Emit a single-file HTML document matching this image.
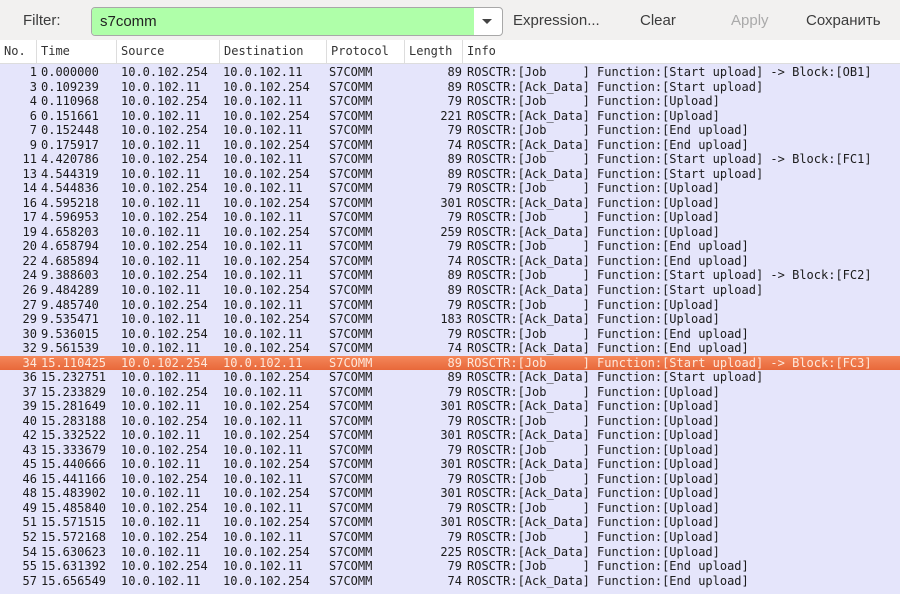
<!DOCTYPE html>
<html><head><meta charset="utf-8"><style>
body{margin:0;width:900px;height:594px;overflow:hidden;background:#e5e5fb;font-family:"Liberation Sans",sans-serif}
.tb{position:absolute;left:0;top:0;width:900px;height:40px;background:#f2f1f0}
.tb span{position:absolute;top:12px;font-size:15px;color:#3c3c3c}
.flt{position:absolute;left:91px;top:7px;width:410px;height:27px;border:1px solid #a8a8a8;border-radius:4px;background:#fff}
.flt .g{position:absolute;left:0;top:0;width:382px;height:27px;background:#afffa9;border-radius:3px 0 0 3px}
.flt .t{position:absolute;left:8px;top:5px;font-size:15px;color:#222}
.flt .arr{position:absolute;left:390px;top:11px;width:0;height:0;border-left:5px solid transparent;border-right:5px solid transparent;border-top:5px solid #444}
.hd{position:absolute;left:0;top:40px;width:900px;height:23px;background:#fff;border-bottom:1px solid #ddd;font-family:"DejaVu Sans Mono",monospace;font-size:12px;color:#333}
.hd span{position:absolute;top:4px;padding-left:4px;border-left:1px solid #ddd;height:23px;top:0;line-height:23px}
.rows{position:absolute;left:0;top:65px;width:900px;font-family:"DejaVu Sans Mono",monospace;font-size:12px;color:#1c1c1c}
.r{position:relative;height:14.54px;line-height:14.54px;white-space:pre}
.r span{position:absolute;top:0}
.a{right:863px;text-align:right}.b{left:41px}.c{left:121px}.d{left:223px}.e{left:329px}.f{right:438px;text-align:right}.g{left:467px}
.sel{background:linear-gradient(#f4875a,#e8683a);color:#fde8dc}
</style></head><body>
<div class="tb">
<span style="left:23px">Filter:</span>
<div class="flt"><div class="g"></div><div class="t">s7comm</div><div class="arr"></div></div>
<span style="left:513px">Expression...</span>
<span style="left:640px">Clear</span>
<span style="left:731px;color:#aaa">Apply</span>
<span style="left:806px">Сохранить</span>
</div>
<div class="hd">
<span style="left:0;border:0">No.</span><span style="left:36px">Time</span><span style="left:116px">Source</span><span style="left:219px">Destination</span><span style="left:326px">Protocol</span><span style="left:404px">Length</span><span style="left:462px">Info</span>
</div>
<div class="rows">
<div class="r"><span class="a">1</span><span class="b">0.000000</span><span class="c">10.0.102.254</span><span class="d">10.0.102.11</span><span class="e">S7COMM</span><span class="f">89</span><span class="g">ROSCTR:[Job     ] Function:[Start upload] -> Block:[OB1]</span></div>
<div class="r"><span class="a">3</span><span class="b">0.109239</span><span class="c">10.0.102.11</span><span class="d">10.0.102.254</span><span class="e">S7COMM</span><span class="f">89</span><span class="g">ROSCTR:[Ack_Data] Function:[Start upload]</span></div>
<div class="r"><span class="a">4</span><span class="b">0.110968</span><span class="c">10.0.102.254</span><span class="d">10.0.102.11</span><span class="e">S7COMM</span><span class="f">79</span><span class="g">ROSCTR:[Job     ] Function:[Upload]</span></div>
<div class="r"><span class="a">6</span><span class="b">0.151661</span><span class="c">10.0.102.11</span><span class="d">10.0.102.254</span><span class="e">S7COMM</span><span class="f">221</span><span class="g">ROSCTR:[Ack_Data] Function:[Upload]</span></div>
<div class="r"><span class="a">7</span><span class="b">0.152448</span><span class="c">10.0.102.254</span><span class="d">10.0.102.11</span><span class="e">S7COMM</span><span class="f">79</span><span class="g">ROSCTR:[Job     ] Function:[End upload]</span></div>
<div class="r"><span class="a">9</span><span class="b">0.175917</span><span class="c">10.0.102.11</span><span class="d">10.0.102.254</span><span class="e">S7COMM</span><span class="f">74</span><span class="g">ROSCTR:[Ack_Data] Function:[End upload]</span></div>
<div class="r"><span class="a">11</span><span class="b">4.420786</span><span class="c">10.0.102.254</span><span class="d">10.0.102.11</span><span class="e">S7COMM</span><span class="f">89</span><span class="g">ROSCTR:[Job     ] Function:[Start upload] -> Block:[FC1]</span></div>
<div class="r"><span class="a">13</span><span class="b">4.544319</span><span class="c">10.0.102.11</span><span class="d">10.0.102.254</span><span class="e">S7COMM</span><span class="f">89</span><span class="g">ROSCTR:[Ack_Data] Function:[Start upload]</span></div>
<div class="r"><span class="a">14</span><span class="b">4.544836</span><span class="c">10.0.102.254</span><span class="d">10.0.102.11</span><span class="e">S7COMM</span><span class="f">79</span><span class="g">ROSCTR:[Job     ] Function:[Upload]</span></div>
<div class="r"><span class="a">16</span><span class="b">4.595218</span><span class="c">10.0.102.11</span><span class="d">10.0.102.254</span><span class="e">S7COMM</span><span class="f">301</span><span class="g">ROSCTR:[Ack_Data] Function:[Upload]</span></div>
<div class="r"><span class="a">17</span><span class="b">4.596953</span><span class="c">10.0.102.254</span><span class="d">10.0.102.11</span><span class="e">S7COMM</span><span class="f">79</span><span class="g">ROSCTR:[Job     ] Function:[Upload]</span></div>
<div class="r"><span class="a">19</span><span class="b">4.658203</span><span class="c">10.0.102.11</span><span class="d">10.0.102.254</span><span class="e">S7COMM</span><span class="f">259</span><span class="g">ROSCTR:[Ack_Data] Function:[Upload]</span></div>
<div class="r"><span class="a">20</span><span class="b">4.658794</span><span class="c">10.0.102.254</span><span class="d">10.0.102.11</span><span class="e">S7COMM</span><span class="f">79</span><span class="g">ROSCTR:[Job     ] Function:[End upload]</span></div>
<div class="r"><span class="a">22</span><span class="b">4.685894</span><span class="c">10.0.102.11</span><span class="d">10.0.102.254</span><span class="e">S7COMM</span><span class="f">74</span><span class="g">ROSCTR:[Ack_Data] Function:[End upload]</span></div>
<div class="r"><span class="a">24</span><span class="b">9.388603</span><span class="c">10.0.102.254</span><span class="d">10.0.102.11</span><span class="e">S7COMM</span><span class="f">89</span><span class="g">ROSCTR:[Job     ] Function:[Start upload] -> Block:[FC2]</span></div>
<div class="r"><span class="a">26</span><span class="b">9.484289</span><span class="c">10.0.102.11</span><span class="d">10.0.102.254</span><span class="e">S7COMM</span><span class="f">89</span><span class="g">ROSCTR:[Ack_Data] Function:[Start upload]</span></div>
<div class="r"><span class="a">27</span><span class="b">9.485740</span><span class="c">10.0.102.254</span><span class="d">10.0.102.11</span><span class="e">S7COMM</span><span class="f">79</span><span class="g">ROSCTR:[Job     ] Function:[Upload]</span></div>
<div class="r"><span class="a">29</span><span class="b">9.535471</span><span class="c">10.0.102.11</span><span class="d">10.0.102.254</span><span class="e">S7COMM</span><span class="f">183</span><span class="g">ROSCTR:[Ack_Data] Function:[Upload]</span></div>
<div class="r"><span class="a">30</span><span class="b">9.536015</span><span class="c">10.0.102.254</span><span class="d">10.0.102.11</span><span class="e">S7COMM</span><span class="f">79</span><span class="g">ROSCTR:[Job     ] Function:[End upload]</span></div>
<div class="r"><span class="a">32</span><span class="b">9.561539</span><span class="c">10.0.102.11</span><span class="d">10.0.102.254</span><span class="e">S7COMM</span><span class="f">74</span><span class="g">ROSCTR:[Ack_Data] Function:[End upload]</span></div>
<div class="r sel"><span class="a">34</span><span class="b">15.110425</span><span class="c">10.0.102.254</span><span class="d">10.0.102.11</span><span class="e">S7COMM</span><span class="f">89</span><span class="g">ROSCTR:[Job     ] Function:[Start upload] -> Block:[FC3]</span></div>
<div class="r"><span class="a">36</span><span class="b">15.232751</span><span class="c">10.0.102.11</span><span class="d">10.0.102.254</span><span class="e">S7COMM</span><span class="f">89</span><span class="g">ROSCTR:[Ack_Data] Function:[Start upload]</span></div>
<div class="r"><span class="a">37</span><span class="b">15.233829</span><span class="c">10.0.102.254</span><span class="d">10.0.102.11</span><span class="e">S7COMM</span><span class="f">79</span><span class="g">ROSCTR:[Job     ] Function:[Upload]</span></div>
<div class="r"><span class="a">39</span><span class="b">15.281649</span><span class="c">10.0.102.11</span><span class="d">10.0.102.254</span><span class="e">S7COMM</span><span class="f">301</span><span class="g">ROSCTR:[Ack_Data] Function:[Upload]</span></div>
<div class="r"><span class="a">40</span><span class="b">15.283188</span><span class="c">10.0.102.254</span><span class="d">10.0.102.11</span><span class="e">S7COMM</span><span class="f">79</span><span class="g">ROSCTR:[Job     ] Function:[Upload]</span></div>
<div class="r"><span class="a">42</span><span class="b">15.332522</span><span class="c">10.0.102.11</span><span class="d">10.0.102.254</span><span class="e">S7COMM</span><span class="f">301</span><span class="g">ROSCTR:[Ack_Data] Function:[Upload]</span></div>
<div class="r"><span class="a">43</span><span class="b">15.333679</span><span class="c">10.0.102.254</span><span class="d">10.0.102.11</span><span class="e">S7COMM</span><span class="f">79</span><span class="g">ROSCTR:[Job     ] Function:[Upload]</span></div>
<div class="r"><span class="a">45</span><span class="b">15.440666</span><span class="c">10.0.102.11</span><span class="d">10.0.102.254</span><span class="e">S7COMM</span><span class="f">301</span><span class="g">ROSCTR:[Ack_Data] Function:[Upload]</span></div>
<div class="r"><span class="a">46</span><span class="b">15.441166</span><span class="c">10.0.102.254</span><span class="d">10.0.102.11</span><span class="e">S7COMM</span><span class="f">79</span><span class="g">ROSCTR:[Job     ] Function:[Upload]</span></div>
<div class="r"><span class="a">48</span><span class="b">15.483902</span><span class="c">10.0.102.11</span><span class="d">10.0.102.254</span><span class="e">S7COMM</span><span class="f">301</span><span class="g">ROSCTR:[Ack_Data] Function:[Upload]</span></div>
<div class="r"><span class="a">49</span><span class="b">15.485840</span><span class="c">10.0.102.254</span><span class="d">10.0.102.11</span><span class="e">S7COMM</span><span class="f">79</span><span class="g">ROSCTR:[Job     ] Function:[Upload]</span></div>
<div class="r"><span class="a">51</span><span class="b">15.571515</span><span class="c">10.0.102.11</span><span class="d">10.0.102.254</span><span class="e">S7COMM</span><span class="f">301</span><span class="g">ROSCTR:[Ack_Data] Function:[Upload]</span></div>
<div class="r"><span class="a">52</span><span class="b">15.572168</span><span class="c">10.0.102.254</span><span class="d">10.0.102.11</span><span class="e">S7COMM</span><span class="f">79</span><span class="g">ROSCTR:[Job     ] Function:[Upload]</span></div>
<div class="r"><span class="a">54</span><span class="b">15.630623</span><span class="c">10.0.102.11</span><span class="d">10.0.102.254</span><span class="e">S7COMM</span><span class="f">225</span><span class="g">ROSCTR:[Ack_Data] Function:[Upload]</span></div>
<div class="r"><span class="a">55</span><span class="b">15.631392</span><span class="c">10.0.102.254</span><span class="d">10.0.102.11</span><span class="e">S7COMM</span><span class="f">79</span><span class="g">ROSCTR:[Job     ] Function:[End upload]</span></div>
<div class="r"><span class="a">57</span><span class="b">15.656549</span><span class="c">10.0.102.11</span><span class="d">10.0.102.254</span><span class="e">S7COMM</span><span class="f">74</span><span class="g">ROSCTR:[Ack_Data] Function:[End upload]</span></div>
</div>
</body></html>
